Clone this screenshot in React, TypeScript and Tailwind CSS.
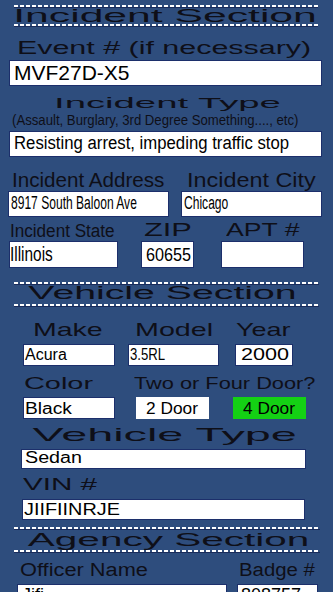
import React from "react";

function Dash({ className }: { className: string }) {
  return (
    <div className={className}>
      <div className="h-[2px] bg-[repeating-linear-gradient(90deg,#ffffff_0px,#ffffff_4px,transparent_4px,transparent_6px)]" />
      <div className="h-px bg-[#1a2c5a]" />
    </div>
  );
}

export default function App() {
  return (
    <div className="w-[333px] h-[592px] overflow-hidden bg-[#2e4d7d] font-['Liberation_Sans',Arial,sans-serif] text-[#0e0f18] flex flex-col *:shrink-0">
      {/* Incident Section */}
      <Dash className="mt-[5px] ml-[14px] w-[304px]" />
      <div className="mt-[2px] flex justify-center pr-[2px]">
        <span className="block w-fit whitespace-nowrap origin-center scale-x-[2.37] text-[18px] leading-[13px]">Incident Section</span>
      </div>
      <Dash className="mt-[1px] ml-[14px] w-[304px]" />

      <div className="mt-[15px] flex justify-center pr-[5px]">
        <span className="block w-fit whitespace-nowrap origin-center scale-x-[1.69] text-[18px] leading-[13px]">Event # (if necessary)</span>
      </div>
      <div className="mt-[5px] ml-[9px] w-[313px] h-[26px] bg-white border border-[#1c2f6b] pt-[4px] pl-[4px]">
        <span className="block w-fit whitespace-nowrap text-[21px] leading-[15px] text-black">MVF27D-X5</span>
      </div>

      <div className="mt-[11px] flex justify-center pl-[1px]">
        <span className="block w-fit whitespace-nowrap origin-center scale-x-[2.55] text-[15px] leading-[11px]">Incident Type</span>
      </div>
      <div className="mt-[7px] pl-[12px]">
        <span className="block w-fit whitespace-nowrap origin-left scale-x-[0.94] text-[14px] leading-[10px]">(Assault, Burglary, 3rd Degree Something...., etc)</span>
      </div>
      <div className="mt-[6px] ml-[9px] w-[313px] h-[26px] bg-white border border-[#1c2f6b] pt-[5px] pl-[4px]">
        <span className="block w-fit whitespace-nowrap origin-left scale-x-[0.93] text-[18px] leading-[13px] text-black">Resisting arrest, impeding traffic stop</span>
      </div>

      {/* Address / City */}
      <div className="mt-[16px] flex items-start">
        <div className="ml-[8px] w-[161px] flex flex-col">
          <div className="pl-[4px]">
            <span className="block w-fit whitespace-nowrap origin-left scale-x-[1.03] text-[20px] leading-[14px]">Incident Address</span>
          </div>
          <div className="mt-[4px] h-[26px] bg-white border border-[#1c2f6b] pt-[5px] pl-[2px]">
            <span className="block w-fit whitespace-nowrap origin-left scale-x-[0.67] text-[18px] leading-[13px] text-black">8917 South Baloon Ave</span>
          </div>
        </div>
        <div className="ml-[12px] w-[141px] flex flex-col">
          <div className="pl-[6px]">
            <span className="block w-fit whitespace-nowrap origin-left scale-x-[1.17] text-[20px] leading-[14px]">Incident City</span>
          </div>
          <div className="mt-[4px] h-[26px] bg-white border border-[#1c2f6b] pt-[5px] pl-[2px]">
            <span className="block w-fit whitespace-nowrap origin-left scale-x-[0.67] text-[18px] leading-[13px] text-black">Chicago</span>
          </div>
        </div>
      </div>

      {/* State / ZIP / APT */}
      <div className="flex items-start">
        <div className="ml-[9px] w-[109px] flex flex-col">
          <div className="mt-[8px] pl-[1px]">
            <span className="block w-fit whitespace-nowrap origin-left scale-x-[0.95] text-[18px] leading-[13px]">Incident State</span>
          </div>
          <div className="mt-[3px] h-[27px] bg-white border border-[#1c2f6b] pt-[5px]">
            <span className="block w-fit whitespace-nowrap origin-left scale-x-[0.77] text-[20px] leading-[14px] text-black">Illinois</span>
          </div>
        </div>
        <div className="ml-[23px] w-[53px] flex flex-col">
          <div className="mt-[6px] pl-[3px]">
            <span className="block w-fit whitespace-nowrap origin-left scale-x-[1.62] text-[19px] leading-[14px]">ZIP</span>
          </div>
          <div className="mt-[4px] h-[27px] bg-white border border-[#1c2f6b] pt-[7px] pl-[4px]">
            <span className="block w-fit whitespace-nowrap origin-left scale-x-[0.9] text-[18px] leading-[13px] text-black">60655</span>
          </div>
        </div>
        <div className="ml-[27px] w-[83px] flex flex-col">
          <div className="mt-[6px] pl-[5px]">
            <span className="block w-fit whitespace-nowrap origin-left scale-x-[1.4] text-[19px] leading-[14px]">APT #</span>
          </div>
          <div className="mt-[4px] h-[27px] bg-white border border-[#1c2f6b]" />
        </div>
      </div>

      {/* Vehicle Section */}
      <Dash className="mt-[14px] ml-[14px] w-[305px]" />
      <div className="mt-[2px] flex justify-center pr-[7px]">
        <span className="block w-fit whitespace-nowrap origin-center scale-x-[2.18] text-[18px] leading-[13px]">Vehicle Section</span>
      </div>
      <Dash className="mt-[4px] ml-[14px] w-[305px]" />

      {/* Make / Model / Year */}
      <div className="mt-[16px] flex items-start">
        <div className="ml-[23px] w-[92px] flex flex-col">
          <div className="pl-[10px]">
            <span className="block w-fit whitespace-nowrap origin-left scale-x-[1.5] text-[19px] leading-[14px]">Make</span>
          </div>
          <div className="mt-[7px] h-[22px] bg-white border border-[#1c2f6b] pt-[4px] pl-[1px]">
            <span className="block w-fit whitespace-nowrap text-[16px] leading-[12px] text-black">Acura</span>
          </div>
        </div>
        <div className="ml-[13px] w-[91px] flex flex-col">
          <div className="pl-[7px]">
            <span className="block w-fit whitespace-nowrap origin-left scale-x-[1.51] text-[19px] leading-[14px]">Model</span>
          </div>
          <div className="mt-[7px] h-[22px] bg-white border border-[#1c2f6b] pt-[4px] pl-[1px]">
            <span className="block w-fit whitespace-nowrap origin-left scale-x-[0.82] text-[16px] leading-[12px] text-black">3.5RL</span>
          </div>
        </div>
        <div className="ml-[16px] w-[58px] flex flex-col">
          <div className="pl-[1px]">
            <span className="block w-fit whitespace-nowrap origin-left scale-x-[1.42] text-[19px] leading-[14px]">Year</span>
          </div>
          <div className="mt-[7px] h-[22px] bg-white border border-[#1c2f6b] pt-[4px] pl-[5px]">
            <span className="block w-fit whitespace-nowrap origin-left scale-x-[1.35] text-[16px] leading-[12px] text-black">2000</span>
          </div>
        </div>
      </div>

      {/* Color / Doors */}
      <div className="mt-[12px] flex items-start">
        <div className="ml-[23px] w-[92px] flex flex-col">
          <div className="pl-[1px]">
            <span className="block w-fit whitespace-nowrap origin-left scale-x-[1.7] text-[17px] leading-[12px]">Color</span>
          </div>
          <div className="mt-[7px] h-[22px] bg-white border border-[#1c2f6b] pt-[5px] pl-[1px]">
            <span className="block w-fit whitespace-nowrap origin-left scale-x-[1.2] text-[16px] leading-[12px] text-black">Black</span>
          </div>
        </div>
        <div className="ml-[19px] w-[180px] flex flex-col">
          <div>
            <span className="block w-fit whitespace-nowrap origin-left scale-x-[1.28] text-[17px] leading-[12px]">Two or Four Door?</span>
          </div>
          <div className="mt-[7px] flex">
            <div className="ml-[2px] w-[73px] h-[22px] bg-white flex justify-center pt-[6px]">
              <span className="block w-fit whitespace-nowrap origin-center scale-x-[1.08] text-[16px] leading-[12px] text-black">2 Door</span>
            </div>
            <div className="ml-[24px] w-[73px] h-[22px] bg-[#14d114] flex justify-center pt-[6px]">
              <span className="block w-fit whitespace-nowrap origin-center scale-x-[1.08] text-[16px] leading-[12px] text-black">4 Door</span>
            </div>
          </div>
        </div>
      </div>

      <div className="mt-[9px] flex justify-center pr-[3px]">
        <span className="block w-fit whitespace-nowrap origin-center scale-x-[2.46] text-[19px] leading-[14px]">Vehicle Type</span>
      </div>
      <div className="mt-[7px] ml-[21px] w-[285px] h-[20px] bg-white border border-[#1c2f6b] pt-[2px] pl-[3px]">
        <span className="block w-fit whitespace-nowrap origin-left scale-x-[1.23] text-[16px] leading-[12px] text-black">Sedan</span>
      </div>

      <div className="mt-[10px] pl-[23px]">
        <span className="block w-fit whitespace-nowrap origin-left scale-x-[1.74] text-[17px] leading-[12px]">VIN #</span>
      </div>
      <div className="mt-[8px] ml-[22px] w-[283px] h-[21px] bg-white border border-[#1c2f6b] pt-[4px] pl-[1px]">
        <span className="block w-fit whitespace-nowrap origin-left scale-x-[1.24] text-[16px] leading-[11px] text-black">JIIFIINRJE</span>
      </div>

      {/* Agency Section */}
      <Dash className="mt-[7px] ml-[14px] w-[306px]" />
      <div className="mt-[4px] flex justify-center pl-[5px]">
        <span className="block w-fit whitespace-nowrap origin-center scale-x-[2.25] text-[18px] leading-[13px]">Agency Section</span>
      </div>
      <Dash className="mt-[3px] ml-[14px] w-[306px]" />

      <div className="mt-[11px] flex items-start">
        <div className="ml-[17px] w-[210px] flex flex-col">
          <div className="pl-[3px]">
            <span className="block w-fit whitespace-nowrap origin-left scale-x-[1.21] text-[18px] leading-[13px]">Officer Name</span>
          </div>
          <div className="mt-[7px] h-[26px] bg-white border border-[#1c2f6b] pt-[4px] pl-[4px]">
            <span className="block w-fit whitespace-nowrap text-[18px] leading-[13px] text-black">Jifi</span>
          </div>
        </div>
        <div className="ml-[10px] w-[81px] flex flex-col">
          <div className="pl-[2px]">
            <span className="block w-fit whitespace-nowrap origin-left scale-x-[1.13] text-[18px] leading-[13px]">Badge #</span>
          </div>
          <div className="mt-[7px] h-[26px] bg-white border border-[#1c2f6b] pt-[4px] pl-[3px]">
            <span className="block w-fit whitespace-nowrap text-[18px] leading-[13px] text-black">808757</span>
          </div>
        </div>
      </div>
    </div>
  );
}
